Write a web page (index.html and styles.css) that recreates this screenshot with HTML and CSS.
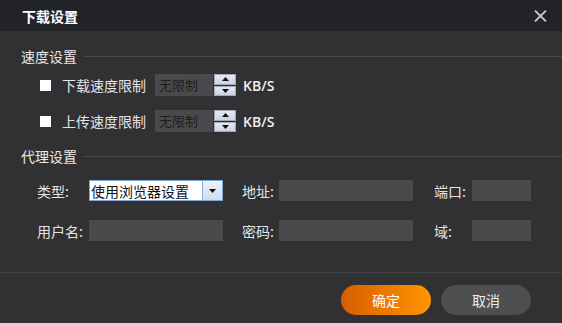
FILE: index.html
```html
<!DOCTYPE html>
<html lang="zh-CN">
<head>
<meta charset="utf-8">
<title>下载设置</title>
<link rel="stylesheet" href="styles.css">
</head>
<body>
<div class="dialog">
  <div class="titlebar">
    <span class="title">下载设置</span>
    <svg class="close" width="13" height="12" viewBox="0 0 13 12"><path d="M1 0.5 L12 11.5 M12 0.5 L1 11.5" stroke="#c9c9c9" stroke-width="1.8" fill="none"/></svg>
  </div>
  <div class="content">
    <div class="section-head first"><span>速度设置</span><i class="rule"></i></div>
    <div class="speed-row">
      <span class="check"></span>
      <span class="speed-label">下载速度限制</span>
      <span class="spin-input">无限制</span>
      <span class="spin">
        <span class="spin-btn"><svg width="7" height="4" viewBox="0 0 7 4"><path d="M3.5 0 L7 4 L0 4Z" fill="#111"/></svg></span>
        <span class="spin-btn"><svg width="7" height="4" viewBox="0 0 7 4"><path d="M0 0 L7 0 L3.5 4Z" fill="#111"/></svg></span>
      </span>
      <span class="unit">KB/S</span>
    </div>
    <div class="speed-row second">
      <span class="check"></span>
      <span class="speed-label">上传速度限制</span>
      <span class="spin-input">无限制</span>
      <span class="spin">
        <span class="spin-btn"><svg width="7" height="4" viewBox="0 0 7 4"><path d="M3.5 0 L7 4 L0 4Z" fill="#111"/></svg></span>
        <span class="spin-btn"><svg width="7" height="4" viewBox="0 0 7 4"><path d="M0 0 L7 0 L3.5 4Z" fill="#111"/></svg></span>
      </span>
      <span class="unit">KB/S</span>
    </div>
    <div class="section-head proxy"><span>代理设置</span><i class="rule"></i></div>
    <div class="proxy-row">
      <span class="plabel l1">类型:</span>
      <span class="select"><span class="select-text">使用浏览器设置</span><span class="select-btn"><svg width="7" height="4" viewBox="0 0 7 4"><path d="M0 0 L7 0 L3.5 4Z" fill="#111"/></svg></span></span>
      <span class="plabel l2">地址:</span>
      <span class="field wide"></span>
      <span class="plabel l3">端口:</span>
      <span class="field narrow"></span>
    </div>
    <div class="proxy-row second">
      <span class="plabel l1">用户名:</span>
      <span class="field wide"></span>
      <span class="plabel l2">密码:</span>
      <span class="field wide"></span>
      <span class="plabel l3">域:</span>
      <span class="field narrow"></span>
    </div>
  </div>
  <div class="footer">
    <button class="btn ok">确定</button>
    <button class="btn cancel">取消</button>
  </div>
</div>
</body>
</html>
```
FILE: styles.css
```css
* { box-sizing: border-box; }
html, body { margin: 0; padding: 0; }
body {
  background: #313133;
  font-family: "Noto Sans CJK SC", "Noto Sans", sans-serif;
  color: #e4e4e4;
  font-size: 14px;
}
.dialog { width: 562px; height: 323px; background: #313133; display: flex; flex-direction: column; }
.titlebar {
  height: 31px;
  background: #222327;
  display: flex;
  align-items: center;
  justify-content: space-between;
  padding: 0 15px 0 22px;
}
.title { font-size: 14px; font-weight: 700; color: #fff; line-height: 16px; }
.close { display: block; margin-top: 0px; }
.content { height: 241px; padding: 0; }
.section-head {
  display: flex;
  align-items: center;
  height: 16px;
  padding-left: 21px;
  line-height: 16px;
  color: #e8e8e8;
}
.section-head.first { margin-top: 17px; }
.section-head.proxy { margin-top: 16px; }
.rule { flex: 1; height: 1px; background: #47474a; margin-left: 6px; margin-top: 1px; }
.speed-row {
  display: flex;
  align-items: center;
  height: 22px;
  margin-top: 10px;
  padding-left: 40px;
}
.speed-row.second { margin-top: 14px; }
.check { width: 11px; height: 11px; background: #fff; margin-right: 11px; }
.speed-label { width: 93px; line-height: 16px; }
.spin-input {
  width: 58px;
  height: 22px;
  background: #4a4a4c;
  color: #1e1e1e;
  font-size: 13px;
  line-height: 22px;
  padding-left: 4px;
}
.spin { display: flex; flex-direction: column; gap: 1px; margin-left: 1px; width: 22px; height: 22px; }
.spin-btn {
  flex: 1;
  display: flex;
  align-items: center;
  justify-content: center;
  background: linear-gradient(#e4e9f1, #cdd5e2);
  border: 1px solid #9fa9b9;
}
.spin-btn svg { display: block; }
.unit { margin-left: 7px; font-family: "Open Sans", "Noto Sans", sans-serif; font-weight: 600; font-size: 14px; color: #f0f0f0; }
.proxy-row {
  display: flex;
  align-items: center;
  height: 21px;
  margin-top: 16px;
  padding-left: 37px;
}
.proxy-row.second { margin-top: 19px; }
.plabel { line-height: 16px; }
.l1 { width: 52px; }
.l2 { width: 37px; margin-left: 19px; }
.l3 { width: 38px; margin-left: 21px; }
.field { height: 21px; background: #4a4a4c; }
.wide { width: 134px; }
.narrow { width: 59px; }
.select {
  width: 134px;
  height: 21px;
  background: #fff;
  border: 1px solid #7ea7d6;
  display: flex;
  align-items: center;
  color: #111;
}
.select-text { flex: 1; padding-left: 1px; line-height: 16px; font-size: 14px; }
.select-btn {
  width: 20px;
  height: 19px;
  margin-right: 0;
  display: flex;
  align-items: center;
  justify-content: center;
  background: linear-gradient(#eef3fa, #cfdcec);
  border-left: 1px solid #8fb0d6;
}
.footer {
  border-top: 1px solid #434345;
  display: flex;
  justify-content: flex-end;
  gap: 10px;
  padding: 12px 31px 0 0;
  flex: 1;
}
.btn {
  width: 90px;
  height: 30px;
  border: 0;
  border-radius: 15px;
  font-family: "Noto Sans CJK SC", sans-serif;
  font-size: 14px;
  color: #fff;
  padding: 0;
  line-height: 30px;
}
.ok { background: linear-gradient(90deg, #d95d00, #ff9400); }
.cancel { background: #4f4f51; color: #ececec; }
```
